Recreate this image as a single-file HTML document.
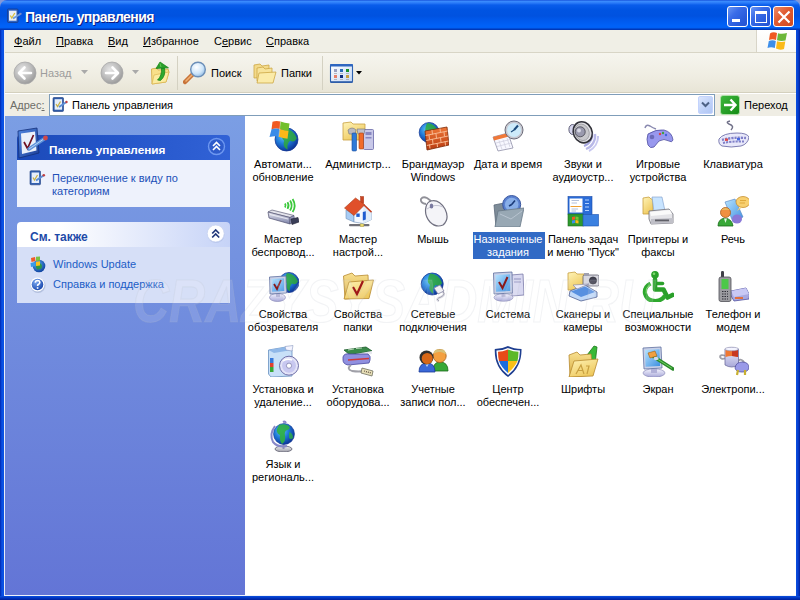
<!DOCTYPE html>
<html><head><meta charset="utf-8">
<style>
*{margin:0;padding:0;box-sizing:border-box}
html,body{width:800px;height:600px;overflow:hidden;background:#8498D8;font-family:"Liberation Sans",sans-serif;font-size:11px;color:#000}
.a{position:absolute}
#title{left:0;top:0;width:800px;height:30px;background:linear-gradient(#0A3FD0 0px,#3E8FFF 1px,#2A7AF8 3px,#0A5DEB 5px,#0054E2 10px,#0052E0 16px,#0059EC 20px,#0062F8 26px,#0060F4 28px,#0038B8 29px,#0038B8 30px);border-radius:7px 7px 0 0}
#ttext{left:25px;top:9px;color:#fff;font-weight:bold;font-size:14px;letter-spacing:-0.55px;text-shadow:1px 1px 0 #0A1A80;white-space:nowrap}
.tb{top:6px;width:21px;height:21px;border:1px solid #fff;border-radius:3px;background:linear-gradient(135deg,#6A96F4,#3A6CE8 35%,#2A5CDC 70%,#2452D0)}
#frameL{left:0;top:30px;width:4px;height:570px;background:linear-gradient(90deg,#0026B0,#0952E6 50%,#0A50E0)}
#frameR{left:796px;top:30px;width:4px;height:570px;background:linear-gradient(90deg,#0A50E0,#0840D0 50%,#00209A)}
#frameB{left:0;top:596px;width:800px;height:4px;background:linear-gradient(#0A50E0,#0030B8 60%,#00209A)}
#menu{left:4px;top:30px;width:792px;height:23px;background:#F0EFE6;border-bottom:1px solid #D8D5C6}
#menu span{position:absolute;top:5px}
#menu u{text-decoration:underline}
#logo{left:756px;top:30px;width:40px;height:22px;background:linear-gradient(#FFFFFF,#F8F8F4);border-left:1px solid #D8D5C8}
#tool{left:4px;top:53px;width:792px;height:40px;background:linear-gradient(#F6F5EE,#EFEDE2 60%,#E8E5D6);border-bottom:1px solid #D4D0BE}
#addr{left:4px;top:93px;width:792px;height:23px;background:#EFEDE4;border-top:1px solid #FFFFFF}
#content{left:4px;top:116px;width:792px;height:480px;background:#fff}
#left{left:5px;top:116px;width:240px;height:479px;background:linear-gradient(#7B9EE4,#6375D6)}
.sep{width:1px;background:#D0CDBE;border-right:1px solid #fff}
.ic{position:absolute;width:75px;text-align:center;line-height:13px;white-space:nowrap}
.ic .t{position:absolute;left:0;width:75px;top:44px}
.ic svg{position:absolute;left:21px;top:4px}
.lbl{width:100px;text-align:center;line-height:13px;white-space:nowrap}
</style></head><body>
<div id="title" class="a"></div>
<div id="ttext" class="a">Панель управления</div>
<svg class="a" style="left:6px;top:8px" width="16" height="16" viewBox="0 0 16 16">
 <rect x="1.5" y="1" width="10.5" height="13.5" rx="1" fill="#3364C0" stroke="#14307A" stroke-width="0.6"/>
 <rect x="3" y="2.7" width="7.5" height="10" fill="#E8EEF8"/>
 <path d="M4.3 7.5 L5.8 10 L8.8 5" stroke="#D8C040" stroke-width="1.3" fill="none"/>
 <path d="M7 10.5 L14.5 6" stroke="#6A9AE0" stroke-width="2"/>
 <circle cx="14.6" cy="5.8" r="1.1" fill="#7A8AC8"/>
</svg>
<div class="a tb" style="left:727px"><div class="a" style="left:4px;top:12px;width:8px;height:3px;background:#fff"></div></div>
<div class="a tb" style="left:750px"><div class="a" style="left:4px;top:4px;width:12px;height:12px;border:1px solid #fff;border-top-width:3px"></div></div>
<div class="a tb" style="left:773px;background:linear-gradient(135deg,#EC8A68,#E05A30 45%,#D04A20)"><svg class="a" style="left:3px;top:3px" width="14" height="14" viewBox="0 0 14 14"><path d="M1.5 1.5 L12.5 12.5 M12.5 1.5 L1.5 12.5" stroke="#fff" stroke-width="2.2"/></svg></div>
<div id="frameL" class="a"></div>
<div id="frameR" class="a"></div>
<div id="frameB" class="a"></div>
<div id="menu" class="a">
 <span style="left:10px"><u>Ф</u>айл</span>
 <span style="left:52px"><u>П</u>равка</span>
 <span style="left:104px"><u>В</u>ид</span>
 <span style="left:139px"><u>И</u>збранное</span>
 <span style="left:210px">С<u>е</u>рвис</span>
 <span style="left:262px"><u>С</u>правка</span>
</div>
<div id="logo" class="a"></div>
<svg class="a" style="left:766px;top:31px" width="22" height="20" viewBox="0 0 22 20">
 <path d="M4 2.5 Q7 0.5 11 2 L10 9 Q6.5 7.5 3 9 Z" fill="#F05A22"/>
 <path d="M12 2.2 Q16 3.5 21 2 L19.5 9.5 Q15 10.5 11 9.2 Z" fill="#6CB83A"/>
 <path d="M2.8 10 Q6.5 8.5 9.8 10 L8.8 17 Q5 15.5 1.5 17 Z" fill="#3C8EEA"/>
 <path d="M11 10.2 Q15 11.5 19.3 10.5 L18 18 Q14 19.5 10 17.5 Z" fill="#FBBA18"/>
</svg>

<div id="tool" class="a"></div>
<!-- back -->
<svg class="a" style="left:13px;top:61px" width="24" height="24" viewBox="0 0 24 24">
 <defs><radialGradient id="gb" cx="40%" cy="35%" r="65%"><stop offset="0" stop-color="#E6E6E6"/><stop offset="0.6" stop-color="#BDBDBD"/><stop offset="1" stop-color="#9C9C9C"/></radialGradient></defs>
 <circle cx="12" cy="12" r="11" fill="url(#gb)" stroke="#A8A8A8" stroke-width="0.8"/>
 <path d="M11.5 6.5 L6 12 L11.5 17.5 M6.5 12 H18" stroke="#fff" stroke-width="2.6" fill="none" stroke-linecap="round" stroke-linejoin="round"/>
</svg>
<div class="a" style="left:40px;top:67px;color:#9D9D9D">Назад</div>
<svg class="a" style="left:81px;top:70px" width="7" height="4"><path d="M0 0H7L3.5 4Z" fill="#A9A9A9"/></svg>
<svg class="a" style="left:100px;top:61px" width="24" height="24" viewBox="0 0 24 24">
 <circle cx="12" cy="12" r="11" fill="url(#gb)" stroke="#A8A8A8" stroke-width="0.8"/>
 <path d="M12.5 6.5 L18 12 L12.5 17.5 M17.5 12 H6" stroke="#fff" stroke-width="2.6" fill="none" stroke-linecap="round" stroke-linejoin="round"/>
</svg>
<svg class="a" style="left:132px;top:70px" width="7" height="4"><path d="M0 0H7L3.5 4Z" fill="#A9A9A9"/></svg>
<!-- up folder -->
<svg class="a" style="left:149px;top:61px" width="23" height="24" viewBox="0 0 23 24">
 <path d="M2.5 8 L8 7 L9 9 L19 8 L20 11 L17 21 L3 23 Z" fill="#F8E08A" stroke="#D0A840" stroke-width="0.8"/>
 <path d="M5 14 L20 11 L17 21 L3 23 Z" fill="#FBEBA0" stroke="#D8B048" stroke-width="0.6"/>
 <path d="M8.5 19 Q13 15 12.5 7 L15.5 7 Q17 15 11.5 19.5 Z" fill="#2EA82E" stroke="#138013" stroke-width="0.7"/>
 <path d="M7 7.5 L11 1 L19.5 6.8 Z" fill="#2AA02A" stroke="#138013" stroke-width="0.7"/>
 <path d="M12 6 L11 2.5" stroke="#70D060" stroke-width="0.8"/>
</svg>
<div class="a" style="left:177px;top:56px;width:1px;height:34px;background:#D4D1C2"></div>
<!-- search -->
<svg class="a" style="left:183px;top:61px" width="25" height="24" viewBox="0 0 25 24">
 <defs><radialGradient id="gs" cx="40%" cy="35%" r="70%"><stop offset="0" stop-color="#FFFFFF"/><stop offset="0.6" stop-color="#CFE6FA"/><stop offset="1" stop-color="#8EB9E2"/></radialGradient></defs>
 <path d="M9 14 L2 21" stroke="#C8743A" stroke-width="4.5" stroke-linecap="round"/>
 <path d="M9 14 L3 20" stroke="#F0B070" stroke-width="1.6" stroke-linecap="round"/>
 <circle cx="15" cy="8.5" r="7.3" fill="url(#gs)" stroke="#6C8FB8" stroke-width="1.4"/>
</svg>
<div class="a" style="left:211px;top:67px">Поиск</div>
<!-- folders -->
<svg class="a" style="left:253px;top:62px" width="24" height="22" viewBox="0 0 24 22">
 <path d="M1 3 L7 2 L9 4 L16 3 L16 15 L1 16 Z" fill="#F3DA8A" stroke="#CDA744" stroke-width="0.8"/>
 <path d="M4 6 L10 5 L12 7 L19 6 L19 18 L4 19 Z" fill="#F7E39A" stroke="#CDA744" stroke-width="0.8"/>
 <path d="M6 11 L23 10 L20 21 L4 21 Z" fill="#FBEBA8" stroke="#CDA744" stroke-width="0.8"/>
</svg>
<div class="a" style="left:281px;top:67px">Папки</div>
<div class="a" style="left:322px;top:56px;width:1px;height:34px;background:#D4D1C2"></div>
<!-- views -->
<svg class="a" style="left:329px;top:63px" width="25" height="21" viewBox="0 0 25 21">
 <defs><linearGradient id="gvw" x1="0" y1="0" x2="1" y2="1"><stop offset="0" stop-color="#FFFFFF"/><stop offset="1" stop-color="#C4D8F6"/></linearGradient></defs>
 <rect x="1.5" y="1.5" width="22" height="18" rx="1.2" fill="url(#gvw)" stroke="#2E62B0" stroke-width="1.1"/>
 <rect x="1" y="1" width="23" height="2.6" rx="1" fill="#2E66C0"/>
 <rect x="1.5" y="18.2" width="22" height="1.6" fill="#2E5EA8"/>
 <rect x="5" y="6" width="3" height="3" fill="#9AA0C0"/><rect x="11" y="6" width="3" height="3" fill="#2A6CB8"/><rect x="17" y="6" width="3" height="3" fill="#18902A"/>
 <rect x="5" y="12" width="3" height="3" fill="#E8806A"/><rect x="11" y="12" width="3" height="3" fill="#102C7C"/><rect x="17" y="12" width="3" height="3" fill="#C8A040"/>
 <path d="M5 10.5 H8 M11 10.5 H14 M17 10.5 H20 M5 16.5 H8 M11 16.5 H14 M17 16.5 H20" stroke="#A8A8B0" stroke-width="0.8"/>
</svg>
<svg class="a" style="left:356px;top:71px" width="6" height="4"><path d="M0 0H6L3 3.5Z" fill="#000"/></svg>


<div id="addr" class="a"></div>
<div class="a" style="left:10px;top:99px;color:#6E6D68">Адрес<span style="text-decoration:underline">:</span></div>
<div class="a" style="left:49px;top:94px;width:666px;height:22px;background:#fff;border:1px solid #7F9DB9"></div>
<svg class="a" style="left:52px;top:97px" width="16" height="16" viewBox="0 0 16 16">
 <rect x="1" y="0.5" width="10.5" height="14" rx="1" fill="#2E5AA6" stroke="#1C3C80" stroke-width="0.6"/>
 <rect x="2.6" y="2.2" width="7.5" height="10.5" fill="#E6EEFA"/>
 <path d="M4 7 L5.5 9.5 L8.5 4.5" stroke="#C8B040" stroke-width="1.2" fill="none"/>
 <path d="M7 10 L14.5 5" stroke="#5C8ED6" stroke-width="2"/>
 <circle cx="14.5" cy="5" r="1.2" fill="#C04040"/>
</svg>
<div class="a" style="left:72px;top:99px">Панель управления</div>
<div class="a" style="left:698px;top:96px;width:15px;height:18px;border-radius:2px;background:linear-gradient(135deg,#DCE6FD,#BDD0F8 60%,#B0C6F4);border:1px solid #C3D3FD"></div>
<svg class="a" style="left:701px;top:101px" width="9" height="7" viewBox="0 0 9 7"><path d="M1 1.5 L4.5 5 L8 1.5" stroke="#4D6185" stroke-width="2" fill="none"/></svg>
<svg class="a" style="left:720px;top:95px" width="20" height="20" viewBox="0 0 20 20">
 <defs><linearGradient id="ggo" x1="0" y1="0" x2="1" y2="1"><stop offset="0" stop-color="#3FB83F"/><stop offset="1" stop-color="#138A13"/></linearGradient></defs>
 <rect x="0.5" y="0.5" width="19" height="19" rx="2.5" fill="url(#ggo)" stroke="#B8E4B0" stroke-width="0.8"/>
 <path d="M10.5 4.5 L15.5 10 L10.5 15.5 M15 10 H4" stroke="#fff" stroke-width="2.4" fill="none" stroke-linejoin="miter"/>
</svg>
<div class="a" style="left:744px;top:99px">Переход</div>

<div id="content" class="a"></div>

<div id="left" class="a"></div>
<!-- panel 1 -->
<div class="a" style="left:17px;top:135px;width:213px;height:25px;border-radius:4px 4px 0 0;background:linear-gradient(90deg,#1C4AB8,#2354C8 40%,#3162D6)"></div>
<div class="a" style="left:17px;top:160px;width:213px;height:47px;background:#EEF2FC"></div>
<div class="a" style="left:49px;top:143px;color:#fff;font-weight:bold;font-size:11.8px;white-space:nowrap">Панель управления</div>
<svg class="a" style="left:207px;top:137px" width="19" height="19" viewBox="0 0 19 19">
 <circle cx="9.5" cy="9.5" r="8" fill="#2E5CCC" stroke="#6E98F0" stroke-width="1.4"/>
 <path d="M6 9 L9.5 5.5 L13 9 M6 13 L9.5 9.5 L13 13" stroke="#fff" stroke-width="1.6" fill="none"/>
</svg>
<svg class="a" style="left:16px;top:127px" width="34" height="34" viewBox="0 0 34 34">
 <defs><linearGradient id="gcp" x1="0" y1="0" x2="1" y2="1"><stop offset="0" stop-color="#4F86E0"/><stop offset="1" stop-color="#1D3F98"/></linearGradient></defs>
 <path d="M2 4 L21 1 L23 26 L3 31 Z" fill="url(#gcp)" stroke="#14307A" stroke-width="0.8"/>
 <path d="M5 6.5 L19 4.5 L20.5 23.5 L6 27 Z" fill="#EAF0FA"/>
 <path d="M8 15 L11.5 21.5 L17.5 8" stroke="#701020" stroke-width="1.7" fill="none" stroke-linejoin="miter"/>
 <path d="M13 22 L28 12" stroke="#5E92DA" stroke-width="3.5" stroke-linecap="round"/>
 <path d="M13 22 L27 12.5" stroke="#B8D4F4" stroke-width="1" />
 <circle cx="29.5" cy="11" r="2.4" fill="#D04848"/>
</svg>
<svg class="a" style="left:29px;top:170px" width="17" height="16" viewBox="0 0 17 16">
 <rect x="1" y="0.8" width="10.5" height="14" rx="1" fill="#3260B0" stroke="#1C3C80" stroke-width="0.6"/>
 <rect x="2.6" y="2.5" width="7.5" height="10.5" fill="#E6EEFA"/>
 <path d="M4 7.5 L5.5 10 L8.5 5" stroke="#C8B040" stroke-width="1.2" fill="none"/>
 <path d="M7 10.5 L14.5 5.5" stroke="#5C8ED6" stroke-width="2"/>
 <circle cx="14.8" cy="5.3" r="1.3" fill="#C04040"/>
</svg>
<div class="a" style="left:52px;top:172px;color:#2150B8;line-height:13px">Переключение к виду по<br>категориям</div>
<!-- panel 2 -->
<div class="a" style="left:17px;top:222px;width:213px;height:25px;border-radius:4px 4px 0 0;background:linear-gradient(90deg,#FFFFFF 20%,#C6D3F7)"></div>
<div class="a" style="left:17px;top:247px;width:213px;height:56px;background:#D6DFF7"></div>
<div class="a" style="left:30px;top:230px;color:#1E4AA8;font-weight:bold;font-size:12px;white-space:nowrap">См. также</div>
<svg class="a" style="left:206px;top:224px" width="20" height="20" viewBox="0 0 20 20">
 <circle cx="10" cy="10.5" r="8.5" fill="#9FB0DE" opacity="0.5"/>
 <circle cx="9.7" cy="9.5" r="8.5" fill="#fff" stroke="#C8D3F0" stroke-width="0.8"/>
 <path d="M6.2 9.5 L9.7 6 L13.2 9.5 M6.2 13.5 L9.7 10 L13.2 13.5" stroke="#21377A" stroke-width="1.7" fill="none"/>
</svg>
<svg class="a" style="left:29px;top:256px" width="17" height="17" viewBox="0 0 17 17">
 <defs><radialGradient id="gglobe" cx="40%" cy="35%" r="70%"><stop offset="0" stop-color="#5AB0F0"/><stop offset="1" stop-color="#0A3C9C"/></radialGradient></defs>
 <circle cx="10" cy="10" r="6.3" fill="url(#gglobe)"/>
 <path d="M7 7 Q10 5 12 8 Q14 10 12 13 Q10 12 9 14 Q6 12 7 7Z" fill="#2E9A3A" opacity="0.9"/>
 <path d="M2 2 L6 1 L6.5 5 L2.5 6 Z" fill="#F05A28"/>
 <path d="M7 0.8 L11 0.5 L11 4.5 L7 5 Z" fill="#7CC142"/>
 <path d="M1.5 7 L6 6 L6.5 10 L2 11 Z" fill="#3A9BEA"/>
 <path d="M7 5.8 L11 5.3 L11 9.5 L7 10 Z" fill="#FBC21A"/>
</svg>
<div class="a" style="left:53px;top:258px;color:#215DC6">Windows Update</div>
<svg class="a" style="left:30px;top:277px" width="16" height="16" viewBox="0 0 16 16">
 <defs><radialGradient id="ghelp" cx="35%" cy="30%" r="70%"><stop offset="0" stop-color="#7AA8F0"/><stop offset="1" stop-color="#1E4CB0"/></radialGradient></defs>
 <circle cx="8" cy="8.5" r="7.5" fill="#8090B8" opacity="0.4"/>
 <circle cx="7.5" cy="7.5" r="7" fill="#fff"/>
 <circle cx="7.5" cy="7.5" r="5.8" fill="url(#ghelp)"/>
 <path d="M5.3 5.6 Q5.5 3.5 7.6 3.5 Q9.8 3.6 9.8 5.5 Q9.8 6.8 8.3 7.5 Q7.6 7.9 7.6 9" stroke="#fff" stroke-width="1.6" fill="none"/>
 <rect x="6.8" y="10.2" width="1.6" height="1.6" fill="#fff"/>
</svg>
<div class="a" style="left:53px;top:278px;color:#215DC6">Справка и поддержка</div>

<!--GRID-->
<svg width="0" height="0" style="position:absolute"><defs>
<radialGradient id="globe" cx="38%" cy="35%" r="70%"><stop offset="0" stop-color="#62C8F8"/><stop offset="0.5" stop-color="#1E78D8"/><stop offset="1" stop-color="#0A2E90"/></radialGradient>
<radialGradient id="globe2" cx="40%" cy="30%" r="70%"><stop offset="0" stop-color="#80E070"/><stop offset="0.45" stop-color="#28A040"/><stop offset="1" stop-color="#0E5A28"/></radialGradient>
<linearGradient id="fold" x1="0" y1="0" x2="0.6" y2="1"><stop offset="0" stop-color="#FFF4B8"/><stop offset="1" stop-color="#EEC85C"/></linearGradient>
<linearGradient id="foldb" x1="0" y1="0" x2="0" y2="1"><stop offset="0" stop-color="#F8E090"/><stop offset="1" stop-color="#D8AC40"/></linearGradient>
<linearGradient id="scr" x1="0" y1="0" x2="1" y2="1"><stop offset="0" stop-color="#B8E4FF"/><stop offset="1" stop-color="#3C8EE0"/></linearGradient>
<linearGradient id="lav" x1="0" y1="0" x2="0" y2="1"><stop offset="0" stop-color="#F4F4FF"/><stop offset="1" stop-color="#A8A8D8"/></linearGradient>
<linearGradient id="gray" x1="0" y1="0" x2="0" y2="1"><stop offset="0" stop-color="#F0F0F0"/><stop offset="1" stop-color="#9C9CA8"/></linearGradient>
<linearGradient id="green" x1="0" y1="0" x2="1" y2="1"><stop offset="0" stop-color="#7ADC5A"/><stop offset="1" stop-color="#1C8A22"/></linearGradient>
<linearGradient id="brick" x1="0" y1="0" x2="0" y2="1"><stop offset="0" stop-color="#F07838"/><stop offset="1" stop-color="#B83A10"/></linearGradient>
</defs></svg>
<svg class="a" style="left:267px;top:120px" width="32" height="32" viewBox="0 0 32 32"><circle cx="19.5" cy="19.5" r="11.5" fill="url(#globe)" stroke="#1A3E98" stroke-width="0.8"/>
<path d="M17.2 8.575000000000001 Q26.4 9.15 29.85 18.35 Q27.549999999999997 22.95 22.95 20.65 Q19.5 24.1 20.65 29.85 Q14.899999999999999 26.4 17.2 20.65 Q12.600000000000001 17.2 17.2 8.575000000000001Z" fill="#2EA83A" opacity="0.85"/>
<path d="M5.5 1.8 Q9 0.5 13.5 1.5 L12.8 9 Q9 8 4.5 9.2 Z" fill="#F05A22"/>
<path d="M13.5 1.5 Q17.5 3 22.5 3.5 L21.5 11 Q17 10.5 12.8 9 Z" fill="#72C02C"/>
<path d="M4.5 9.2 Q9 8 12.8 9 L11.8 16.8 Q7.5 15.8 2.5 17 Z" fill="#3A8CE8"/>
<path d="M12.8 9 Q17 10.5 21.5 11 L20.5 18.8 Q16 18.3 11.8 16.8 Z" fill="#FBB818"/>
<path d="M13.5 1.5 L11.8 16.8" stroke="#FFFFFF" stroke-width="0.5" opacity="0.6"/></svg>
<div class="a lbl" style="left:233px;top:158px">Автомати...<br>обновление</div>
<svg class="a" style="left:342px;top:120px" width="32" height="32" viewBox="0 0 32 32">
<path d="M1 3 L9 2 L11 4 L23 4 L23 20 L1 20 Z" fill="url(#fold)" stroke="#C8A040" stroke-width="0.8"/>
<rect x="21.5" y="9.5" width="10" height="20" rx="1" fill="#C8C8E8" stroke="#6A6AA8" stroke-width="0.8"/>
<rect x="23.5" y="12" width="6" height="3" fill="#8888C0"/><rect x="23.5" y="17" width="6" height="1.5" fill="#8888C0"/>
<path d="M6 10 Q10 6 14 10 L13 14 L7 14 Z" fill="#B8B8C0" stroke="#707078" stroke-width="0.6"/>
<rect x="10" y="13" width="4.5" height="18" rx="1" fill="#2E7AD8" stroke="#1A4A9A" stroke-width="0.6"/>
<path d="M15 9 L23 9 L22 14 L16 14 Z" fill="#C0C0C8" stroke="#707078" stroke-width="0.6"/>
<rect x="17" y="13" width="4.5" height="16" rx="1" fill="#F06A2A" stroke="#A84010" stroke-width="0.6"/></svg>
<div class="a lbl" style="left:308px;top:158px">Администр...</div>
<svg class="a" style="left:417px;top:120px" width="32" height="32" viewBox="0 0 32 32"><circle cx="12.2" cy="12.5" r="10" fill="url(#globe)" stroke="#1A3E98" stroke-width="0.8"/>
<path d="M10.2 3.0 Q18.2 3.5 21.2 11.5 Q19.2 15.5 15.2 13.5 Q12.2 16.5 13.2 21.5 Q8.2 18.5 10.2 13.5 Q6.199999999999999 10.5 10.2 3.0Z" fill="#2EA83A" opacity="0.85"/>
<path d="M8 11 L30 7 L32 25 L10 30 Z" fill="url(#brick)" stroke="#7A2A08" stroke-width="0.8"/>
<path d="M8.6 15.5 L30.6 11 M9.2 20.5 L31.2 16 M9.8 25.5 L31.6 21" stroke="#F8B890" stroke-width="1"/>
<path d="M15 10 L15.5 14.5 M23 8.5 L23.5 13 M12 15 L12.5 19.5 M19 14 L19.5 18.5 M27 12 L27.5 16.5 M15.5 19 L16 24 M23.5 17.5 L24 22 M12.5 24.5 L13 28.5 M20 23 L20.5 27 M28 21 L28.5 25.5" stroke="#F8B890" stroke-width="1"/></svg>
<div class="a lbl" style="left:383px;top:158px">Брандмауэр<br>Windows</div>
<svg class="a" style="left:492px;top:120px" width="32" height="32" viewBox="0 0 32 32">
<path d="M1 17 L16 13 L21 28 L6 31 Z" fill="#F8F8FF" stroke="#9090A8" stroke-width="0.8"/>
<path d="M1 17 L16 13 L17 16.5 L2 20.5 Z" fill="#F07838"/>
<path d="M4 23 L18 19.5 M5 26.5 L19 23 M7 20.5 L10 29.5 M11 19.5 L14 28.5 M15 18 L18 27" stroke="#D0D0E0" stroke-width="0.8"/>
<circle cx="22" cy="10" r="9" fill="#C8C8D0" stroke="#6A6A78" stroke-width="1"/>
<circle cx="22" cy="10" r="7" fill="#CDEBFA"/>
<path d="M22 10 L26 5.5" stroke="#1A4A7A" stroke-width="2"/><path d="M22 10 L19 12" stroke="#1A4A7A" stroke-width="1.2"/></svg>
<div class="a lbl" style="left:458px;top:158px">Дата и время</div>
<svg class="a" style="left:567px;top:120px" width="32" height="32" viewBox="0 0 32 32">
<path d="M28 14 A14 14 0 0 1 19 29" stroke="#B8B8E8" stroke-width="2.4" fill="none"/>
<path d="M31 16 A16 16 0 0 1 22 31" stroke="#C8C8F0" stroke-width="2" fill="none"/>
<path d="M25 12 A12 12 0 0 1 17 26" stroke="#A8A8E0" stroke-width="2" fill="none"/>
<ellipse cx="5.5" cy="9.5" rx="3.6" ry="5" fill="#D4D4EC" stroke="#50506A" stroke-width="0.9"/>
<ellipse cx="15.7" cy="12.3" rx="9.3" ry="10.8" transform="rotate(-25 15.7 12.3)" fill="#E0E0E4" stroke="#303038" stroke-width="1.6"/>
<ellipse cx="15" cy="12.3" rx="7" ry="8.5" transform="rotate(-25 15 12.3)" fill="#C8C8CC" stroke="#9A9AA0" stroke-width="0.8"/>
<circle cx="13.2" cy="11.8" r="5" fill="#9A9AAE" stroke="#50505A" stroke-width="0.9"/>
<circle cx="12" cy="10.5" r="2" fill="#D8D8E4"/></svg>
<div class="a lbl" style="left:533px;top:158px">Звуки и<br>аудиоустр...</div>
<svg class="a" style="left:642px;top:120px" width="32" height="32" viewBox="0 0 32 32">
<path d="M3 8 Q4 4 8 6 Q11 8 14 9" stroke="#8A8AB0" stroke-width="1.5" fill="none"/>
<path d="M6 14 Q14 9 22 10 Q30 12 31 20 Q30 23 27 21 Q22 18 17 21 L12 27 Q8 29 6 25 Q4 19 6 14 Z" fill="#9898EE" stroke="#5050A0" stroke-width="0.8"/>
<circle cx="10" cy="17" r="2.3" fill="#6A6AB8"/>
<circle cx="18" cy="14" r="1.2" fill="#E04040"/><circle cx="21" cy="13" r="1.2" fill="#40A040"/><circle cx="24" cy="15" r="1.2" fill="#4060E0"/></svg>
<div class="a lbl" style="left:608px;top:158px">Игровые<br>устройства</div>
<svg class="a" style="left:717px;top:120px" width="32" height="32" viewBox="0 0 32 32">
<path d="M14 10 Q18 6 12 4 Q8 2 13 1" stroke="#707088" stroke-width="1.5" fill="none"/>
<path d="M2 19 Q6 13 20 13 Q30 13 32 17 Q31 24 24 26 Q14 28 5 26 Q1 24 2 19 Z" fill="#E8E8FA" stroke="#6060A0" stroke-width="0.8"/>
<path d="M5 20 Q15 17 29 18" stroke="#8080C8" stroke-width="2.4" fill="none" stroke-dasharray="2.2 1"/>
<path d="M6 23 Q15 21 27 21.5" stroke="#8080C8" stroke-width="2" fill="none" stroke-dasharray="2.2 1"/>
<rect x="8" y="18.5" width="3" height="2.4" fill="#E04848"/><rect x="20" y="18" width="3" height="2.4" fill="#4868E0"/></svg>
<div class="a lbl" style="left:683px;top:158px">Клавиатура</div>
<svg class="a" style="left:267px;top:195px" width="32" height="32" viewBox="0 0 32 32">
<path d="M18.0 8.6 A3.5 3.5 0 0 1 18.0 12.4" stroke="#3CC83C" stroke-width="1.8" fill="none"/><path d="M20.5 7.1 A6.5 6.5 0 0 1 20.5 13.9" stroke="#3CC83C" stroke-width="1.8" fill="none"/><path d="M23.1 5.5 A9.5 9.5 0 0 1 23.1 15.5" stroke="#3CC83C" stroke-width="1.8" fill="none"/><path d="M25.6 3.9 A12.5 12.5 0 0 1 25.6 17.1" stroke="#3CC83C" stroke-width="1.8" fill="none"/>
<defs><linearGradient id="usbf" x1="0" y1="0" x2="0" y2="1"><stop offset="0" stop-color="#E8E8F0"/><stop offset="1" stop-color="#7A80A8"/></linearGradient></defs>
<path d="M1 17 L5 15 L27 20.5 L23 22.5 Z" fill="#E4E4EC" stroke="#606078" stroke-width="0.7"/>
<path d="M1 17 L23 22.5 L23 29 L2 23 Z" fill="url(#usbf)" stroke="#505070" stroke-width="0.7"/>
<path d="M23 22.5 L27 20.5 L27.5 26.5 L23 29 Z" fill="#9A9EC0" stroke="#505070" stroke-width="0.6"/>
<path d="M24 24 L31 22.5 L32 27 L25 29.5 Z" fill="#3A3E58" stroke="#202030" stroke-width="0.6"/>
<path d="M3 19.5 L21 24" stroke="#F4F4FA" stroke-width="0.8"/></svg>
<div class="a lbl" style="left:233px;top:233px">Мастер<br>беспровод...</div>
<svg class="a" style="left:342px;top:195px" width="32" height="32" viewBox="0 0 32 32">
<path d="M20 26 V30" stroke="#909098" stroke-width="1.5"/>
<rect x="7" y="29" width="20.5" height="2.2" rx="1" fill="#707078"/><circle cx="20" cy="30" r="2" fill="#E8D870" stroke="#A09040" stroke-width="0.5"/>
<path d="M4 15 L12 18.5 L12 27 L4 23.5 Z" fill="#A8CCF4" stroke="#7090B8" stroke-width="0.6"/>
<path d="M12 18.5 L21.5 9 L29.5 17 L29.5 24.5 L21 28.5 L12 27 Z" fill="#F4F8FF" stroke="#7090B8" stroke-width="0.6"/>
<path d="M21.5 9 L29.5 17 L29.5 24.5 L21 28.5 Z" fill="#E0ECFA"/>
<rect x="14.3" y="18.5" width="3.4" height="3.4" fill="#1E5CD0"/>
<path d="M20.8 17 L23.8 16.2 L23.8 24.5 L20.8 25.5 Z" fill="#1E5CD0"/>
<rect x="18.5" y="1.5" width="3.2" height="7" fill="#C84424" stroke="#A83A18" stroke-width="0.5"/>
<path d="M2.5 13 L13.5 3 L22.5 9.5 L21.5 11 L12 20.5 Z" fill="#E0502A" stroke="#A83A18" stroke-width="0.6"/>
<path d="M22.5 9.5 L30 16.5 L29 17.8 L21.5 10.6 Z" fill="#C84020"/>
</svg>
<div class="a lbl" style="left:308px;top:233px">Мастер<br>настрой...</div>
<svg class="a" style="left:417px;top:195px" width="32" height="32" viewBox="0 0 32 32">
<path d="M9 9 Q3 8 4 4 Q6 1 10 3 Q13 5 15 7" stroke="#909098" stroke-width="1.8" fill="none"/>
<path d="M14 6 Q22 4 28 14 Q33 24 26 30 Q19 33 13 27 Q7 20 9 12 Q10 7 14 6 Z" fill="#F4F4F8" stroke="#707080" stroke-width="1.2"/>
<path d="M10 14 Q18 8 26 12" stroke="#B8B8C8" stroke-width="0.8" fill="none"/>
<ellipse cx="14.5" cy="11" rx="1.8" ry="2.5" fill="#7A7AA0"/></svg>
<div class="a lbl" style="left:383px;top:233px">Мышь</div>
<svg class="a" style="left:492px;top:195px" width="32" height="32" viewBox="0 0 32 32">
<path d="M2 10 L12 8 L14 11 L26 10 L27 30 L4 32 Z" fill="#7E8C98" stroke="#5A6878" stroke-width="0.8"/>
<circle cx="19.7" cy="9.5" r="9" fill="#5A80D0" stroke="#3A58A0" stroke-width="1"/>
<circle cx="19.7" cy="9.5" r="6.8" fill="#88AEE8"/>
<path d="M19.7 9.5 L23 5.5 M19.7 9.5 L17 11" stroke="#1A3A78" stroke-width="1.6"/>
<path d="M6 16 L32 13 L28 32 L3 32 Z" fill="#98A8B4" stroke="#687888" stroke-width="0.8"/>
<path d="M8 19 L19 24 L30 16" stroke="#B8C4D0" stroke-width="1" fill="none"/></svg>
<div class="a" style="left:473px;top:232px;width:72px;height:27px;background:#316AC5"></div>
<div class="a lbl" style="left:458px;top:233px;color:#fff">Назначенные<br>задания</div>
<svg class="a" style="left:567px;top:195px" width="32" height="32" viewBox="0 0 32 32">
<rect x="1" y="1.5" width="24" height="18" fill="#2A6CD8" stroke="#1A4AA8" stroke-width="0.6"/>
<rect x="2.5" y="3.5" width="13" height="14" fill="#FFFFFF"/>
<rect x="3.5" y="11" width="11" height="1" fill="#F0A030"/>
<path d="M4.5 5.5 H12 M4.5 8 H10 M4.5 14 H11 M4.5 16 H9" stroke="#A0B0D0" stroke-width="0.8"/>
<path d="M18 5 H22 M18 8.5 H22 M18 12 H22 M18 15.5 H22" stroke="#B0D0FF" stroke-width="1.2"/>
<rect x="1" y="19" width="15.5" height="12" fill="#2E9A2E" stroke="#1A6A1A" stroke-width="0.6"/>
<rect x="16" y="19.5" width="15.5" height="11.5" fill="#3A80E0" stroke="#1A50B0" stroke-width="0.6"/>
<path d="M5 22 L8 21.5 L8 24.5 L5 25Z" fill="#F05A22"/><path d="M8.5 21.5 L11.5 22 L11.5 25 L8.5 24.5Z" fill="#7CC232"/>
<path d="M5 25.5 L8 25 L8 28 L5 28.5Z" fill="#3C8EEA"/><path d="M8.5 25 L11.5 25.5 L11.5 28.5 L8.5 28Z" fill="#FBBA18"/></svg>
<div class="a lbl" style="left:533px;top:233px">Панель задач<br>и меню "Пуск"</div>
<svg class="a" style="left:642px;top:195px" width="32" height="32" viewBox="0 0 32 32">
<path d="M1 3 L7 2 L9 4 L11 4 L11 19 L1 19 Z" fill="url(#fold)" stroke="#C8A040" stroke-width="0.8"/>
<path d="M10 2 L20 2 L23 16 L12 17 Z" fill="#C8E4FF" stroke="#7898C8" stroke-width="0.6"/>
<path d="M7 16 L27 14 L31 19 L31 28 L9 29 L7 24 Z" fill="#E4E4E8" stroke="#707078" stroke-width="0.8"/>
<path d="M8 17 L28 15 L30 19 L9 21 Z" fill="#FAFAFA"/>
<path d="M9 24 L31 23 L31 28 L9 29 Z" fill="#C0C0C8"/>
<rect x="13" y="24.5" width="14" height="1.8" fill="#606068"/></svg>
<div class="a lbl" style="left:608px;top:233px">Принтеры и<br>факсы</div>
<svg class="a" style="left:717px;top:195px" width="32" height="32" viewBox="0 0 32 32">
<path d="M8 7 L18 4 L26 22 L16 27 Z" fill="url(#scr)" stroke="#5080C0" stroke-width="0.6"/>
<ellipse cx="20" cy="24" rx="5" ry="4.5" fill="#8A78D8"/>
<ellipse cx="26" cy="7" rx="7" ry="5.5" fill="#F8D070" stroke="#C89030" stroke-width="0.8"/>
<path d="M22 13 L20 16 L25 12.5" fill="#F8D070"/>
<path d="M23 5.5 H29 M22.5 8 H28" stroke="#D8A030" stroke-width="0.8"/>
<path d="M1 31 Q1 24 8 23 Q15 24 16 31 Z" fill="#38A838" stroke="#1A6A1A" stroke-width="0.8"/>
<path d="M7 23.5 L8.5 28 L10 23.5" fill="#E8F8E8"/>
<circle cx="8.5" cy="17.5" r="5" fill="#F09040" stroke="#A85A18" stroke-width="0.8"/>
<path d="M4 15 Q8.5 11 13 15" fill="#E8B860"/></svg>
<div class="a lbl" style="left:683px;top:233px">Речь</div>
<svg class="a" style="left:267px;top:270px" width="32" height="32" viewBox="0 0 32 32"><circle cx="22" cy="12.5" r="10" fill="url(#globe)" stroke="#1A3E98" stroke-width="0.8"/>
<path d="M20.0 3.0 Q28.0 3.5 31.0 11.5 Q29.0 15.5 25.0 13.5 Q22 16.5 23.0 21.5 Q18.0 18.5 20.0 13.5 Q16.0 10.5 20.0 3.0Z" fill="#2EA83A" opacity="0.85"/>
<ellipse cx="10.5" cy="27.5" rx="8" ry="4" fill="url(#lav)" stroke="#8080B0" stroke-width="0.6"/>
<rect x="9" y="22" width="4" height="5" fill="#B8B8D8"/>
<path d="M2.5 7 L19 6 L19.5 23 L3 24 Z" fill="#C8D0E8" stroke="#6070A0" stroke-width="0.8"/>
<path d="M4.5 9 L17 8.2 L17.3 21 L5 21.8 Z" fill="url(#scr)"/>
<path d="M7 14 L10 19 L14 10" stroke="#8A1A1A" stroke-width="1.8" fill="none"/></svg>
<div class="a lbl" style="left:233px;top:308px">Свойства<br>обозревателя</div>
<svg class="a" style="left:342px;top:270px" width="32" height="32" viewBox="0 0 32 32">
<path d="M1.5 6 L10 3 L13 6 L26 5 L27 27 L3 29 Z" fill="url(#foldb)" stroke="#B88A30" stroke-width="0.8"/>
<path d="M7 12 L31.5 10 L27 28.5 L2 29 Z" fill="url(#fold)" stroke="#B88A30" stroke-width="0.8"/>
<path d="M11 17 L15 24 L21 11" stroke="#A01818" stroke-width="2.2" fill="none"/></svg>
<div class="a lbl" style="left:308px;top:308px">Свойства<br>папки</div>
<svg class="a" style="left:417px;top:270px" width="32" height="32" viewBox="0 0 32 32"><circle cx="15.2" cy="14" r="11" fill="url(#globe)" stroke="#1A3E98" stroke-width="0.8"/>
<path d="M13.0 3.5500000000000007 Q21.799999999999997 4.1 25.1 12.9 Q22.9 17.3 18.5 15.1 Q15.2 18.4 16.3 23.9 Q10.799999999999999 20.6 13.0 15.1 Q8.6 11.8 13.0 3.5500000000000007Z" fill="#2EA83A" opacity="0.85"/>
<path d="M24 20 Q30 24 24 27 Q18 29 22 31" stroke="#E0E0E8" stroke-width="2.6" fill="none"/>
<path d="M24 20 Q30 24 24 27 Q18 29 22 31" stroke="#9090A0" stroke-width="0.8" fill="none"/>
<path d="M17 18 L23 15 L27 21 L21 24 Z" fill="#F0F0F4" stroke="#8080A0" stroke-width="0.8"/></svg>
<div class="a lbl" style="left:383px;top:308px">Сетевые<br>подключения</div>
<svg class="a" style="left:492px;top:270px" width="32" height="32" viewBox="0 0 32 32">
<path d="M19 5 L31 4 L32 25 L20 26 Z" fill="#D8D8F0" stroke="#7A7AA8" stroke-width="0.8"/>
<path d="M22 9 H29 M22 12 H29" stroke="#9090C0" stroke-width="1.2"/>
<ellipse cx="11.5" cy="27.5" rx="9.5" ry="3.8" fill="url(#lav)" stroke="#8080B0" stroke-width="0.6"/>
<rect x="9.5" y="22" width="4" height="5" fill="#B8B8D8"/>
<path d="M1.5 3 L20 2 L20.5 23 L2 24 Z" fill="#C8D0E8" stroke="#6070A0" stroke-width="0.8"/>
<path d="M3.5 5 L18 4.3 L18.3 21 L4 21.8 Z" fill="url(#scr)"/>
<path d="M7 12 L10.5 18 L15.5 7" stroke="#8A1A1A" stroke-width="2" fill="none"/></svg>
<div class="a lbl" style="left:458px;top:308px">Система</div>
<svg class="a" style="left:567px;top:270px" width="32" height="32" viewBox="0 0 32 32">
<path d="M1 3 L8 2 L10 4 L17 4 L17 20 L1 20 Z" fill="url(#fold)" stroke="#C8A040" stroke-width="0.8"/>
<rect x="16" y="5" width="16" height="11" rx="1.5" fill="#D8D8E0" stroke="#606070" stroke-width="0.8"/>
<rect x="17" y="3" width="5" height="3" fill="#A0A0B0"/>
<circle cx="26" cy="10.5" r="3.6" fill="#404050" stroke="#202028" stroke-width="0.6"/>
<path d="M3 21 L18 15 L30 22 L30 27 L14 31 L2 26 Z" fill="#C0D8F8" stroke="#506090" stroke-width="0.8"/>
<path d="M4 21.5 L18 16.5 L28 22 L14 27 Z" fill="#5890E0"/>
<path d="M6 15 L22 14 L10 19 Z" fill="#F0F0F8" stroke="#8080A0" stroke-width="0.6"/></svg>
<div class="a lbl" style="left:533px;top:308px">Сканеры и<br>камеры</div>
<svg class="a" style="left:642px;top:270px" width="32" height="32" viewBox="0 0 32 32">
<circle cx="13" cy="4.8" r="3.8" fill="#2AA02A"/>
<path d="M13 9.5 L13 19.5 L21.5 19.5 L25.5 27.5 L30.5 25" stroke="#2AA02A" stroke-width="4.6" fill="none" stroke-linejoin="round" stroke-linecap="round"/>
<path d="M13 13.5 L20.5 13.5" stroke="#2AA02A" stroke-width="3.6" stroke-linecap="round"/>
<path d="M8.5 13.5 Q2 17 3 23.5 Q5 31 13.5 31 Q20.5 30.5 23 25.5" stroke="#2EA82E" stroke-width="4.2" fill="none"/>
<path d="M8 14.5 Q3 18 4 23.5" stroke="#88E070" stroke-width="1" fill="none"/>
<circle cx="12" cy="3.8" r="1.3" fill="#80D870"/></svg>
<div class="a lbl" style="left:608px;top:308px">Специальные<br>возможности</div>
<svg class="a" style="left:717px;top:270px" width="32" height="32" viewBox="0 0 32 32">
<path d="M14 21 L29 18 L32.5 25 L32 29 L17 31 L13.5 25 Z" fill="#A8A8E0" stroke="#5050A0" stroke-width="0.8"/>
<path d="M14 21 L29 18 L32 24 L17 27 Z" fill="#C8C8F4"/>
<rect x="18" y="27" width="8" height="2" fill="#E07040"/>
<rect x="4" y="1" width="3" height="8" rx="1.2" fill="#404048"/>
<rect x="2" y="7" width="12" height="24.5" rx="2" fill="#9C9CA0" stroke="#505058" stroke-width="0.8"/>
<rect x="4.5" y="9" width="7" height="10" fill="#4CC848"/>
<path d="M5 21.5 H11 M5 24 H11 M5 26.5 H11 M5 29 H11" stroke="#303038" stroke-width="1.2" stroke-dasharray="1.5 1"/></svg>
<div class="a lbl" style="left:683px;top:308px">Телефон и<br>модем</div>
<svg class="a" style="left:267px;top:345px" width="32" height="32" viewBox="0 0 32 32">
<path d="M1.5 5 L19 2 L25 5 L25 31 L4 32 L1.5 29 Z" fill="#C8E0F8" stroke="#6890C0" stroke-width="0.8"/>
<path d="M1.5 5 L19 2 L25 5 L7 8 Z" fill="#90B8E8"/>
<path d="M18 1.5 L26 0.5 L25 6 L19 5 Z" fill="#F4F4FF" stroke="#8898C0" stroke-width="0.6"/>
<rect x="3" y="18" width="3.5" height="4" fill="#E04030"/><rect x="3" y="22" width="3.5" height="5" fill="#38A838"/><rect x="3" y="13" width="3.5" height="5" fill="#3878D8"/>
<circle cx="22" cy="20.7" r="9.5" fill="#E4E4F8" stroke="#7070A8" stroke-width="1"/>
<circle cx="22" cy="20.7" r="7" fill="#C8C8F0"/>
<path d="M16 16 Q20 13 25 15" stroke="#FFFFFF" stroke-width="1.5" fill="none"/>
<circle cx="22" cy="20.7" r="2.6" fill="#FFFFFF" stroke="#8080B0" stroke-width="0.8"/></svg>
<div class="a lbl" style="left:233px;top:383px">Установка и<br>удаление...</div>
<svg class="a" style="left:342px;top:345px" width="32" height="32" viewBox="0 0 32 32">
<path d="M2 5 L24 2 L30 6 L8 10 Z" fill="#3A8A4A" stroke="#1A5A2A" stroke-width="0.8"/>
<path d="M8 10 L30 6 L30 9 L8 13 Z" fill="#E8E8F0"/>
<path d="M6 5 L12 4 M14 3.5 L20 3" stroke="#B8D8B8" stroke-width="1"/>
<path d="M1 12 Q2 8 8 9 L26 9 Q29 11 28 15 L27 18 L6 20 Q1 19 1 15 Z" fill="#9090E0" stroke="#4848A0" stroke-width="0.8"/>
<path d="M6 15 L27 13.5" stroke="#D03838" stroke-width="1.5"/>
<path d="M9 20 Q4 24 10 26 Q17 27 22 26" stroke="#A0A0A8" stroke-width="1.8" fill="none"/>
<path d="M20 23 L31 26 L30 31 L19 28 Z" fill="#E8E0B8" stroke="#707060" stroke-width="0.8"/>
<path d="M22 26 L29 28" stroke="#605040" stroke-width="1.2" stroke-dasharray="1 1"/></svg>
<div class="a lbl" style="left:308px;top:383px">Установка<br>оборудова...</div>
<svg class="a" style="left:417px;top:345px" width="32" height="32" viewBox="0 0 32 32">
<path d="M16 26 Q16 17 23 17 Q31 17 31 26 Z" fill="#38A838" stroke="#1A6A1A" stroke-width="0.8"/>
<circle cx="22.7" cy="11" r="6.5" fill="#F4A040" stroke="#A86018" stroke-width="0.8"/>
<path d="M16.5 9 Q17 3.5 22.7 4.5 Q28.5 3.5 29 9.5 Q26 6.5 22 7 Q19 7 16.5 9Z" fill="#D8C078"/>
<path d="M2 27 Q2 18 10 18 Q18 18 18 27 Z" fill="#3A68D8" stroke="#1A3A98" stroke-width="0.8"/>
<path d="M8 18.5 L10 22 L12 18.5" fill="#C0D8F8"/>
<circle cx="9.5" cy="12.5" r="7" fill="#303030"/>
<circle cx="10.2" cy="13.5" r="5.5" fill="#D86818"/></svg>
<div class="a lbl" style="left:383px;top:383px">Учетные<br>записи пол...</div>
<svg class="a" style="left:492px;top:345px" width="32" height="32" viewBox="0 0 32 32">
<path d="M16 1 Q22 4 29.5 4 Q30 22 16 32 Q2 22 2.8 4 Q10 4 16 1 Z" fill="#1E3E90" />
<path d="M16 3 Q21.5 5.5 28 5.5 Q28 21 16 30 Q4 21 4.5 5.5 Q10.5 5.5 16 3 Z" fill="#FFFFFF"/>
<path d="M16 4.5 Q10.5 6.8 6 6.8 Q6 12 7 16 L16 16 Z" fill="#E84A18"/>
<path d="M16 4.5 Q21.5 6.8 26.5 6.8 Q26.5 12 25.5 16 L16 16 Z" fill="#5CB828"/>
<path d="M7 16 L16 16 L16 28 Q9 22 7 16 Z" fill="#1A6CE0"/>
<path d="M25.5 16 L16 16 L16 28 Q23 22 25.5 16 Z" fill="#F8C018"/></svg>
<div class="a lbl" style="left:458px;top:383px">Центр<br>обеспечен...</div>
<svg class="a" style="left:567px;top:345px" width="32" height="32" viewBox="0 0 32 32">
<path d="M17 14 L27 1 L30 2 L28 19 L20 22 Z" fill="#38B838" stroke="#1A7A1A" stroke-width="0.8"/>
<path d="M2 10 L10 7 L13 10 L24 9 L26 30 L3 32 Z" fill="url(#foldb)" stroke="#B88A30" stroke-width="0.8"/>
<path d="M7 16 L31 14 L26 31 L2 32 Z" fill="url(#fold)" stroke="#B88A30" stroke-width="0.8"/>
<path d="M9 29 L14 20 L17 29 M11 25.5 H16 M19 21 L22 21 L20 29" stroke="#C8A040" stroke-width="1.2" fill="none"/></svg>
<div class="a lbl" style="left:533px;top:383px">Шрифты</div>
<svg class="a" style="left:642px;top:345px" width="32" height="32" viewBox="0 0 32 32">
<ellipse cx="12" cy="28" rx="11" ry="4.2" fill="url(#lav)" stroke="#8080B0" stroke-width="0.6"/>
<rect x="9" y="22" width="6" height="6" fill="#B0B0D8"/>
<path d="M1 3 L19 2 L20 23 L2 24 Z" fill="#C8D0E8" stroke="#6070A0" stroke-width="0.8"/>
<path d="M3 5 L17.5 4.3 L18 21 L3.5 21.8 Z" fill="url(#scr)"/>
<path d="M12 12 L31 24" stroke="#2A8A2A" stroke-width="3.4" stroke-linecap="round"/>
<path d="M12 12 L30 23.3" stroke="#70D060" stroke-width="1"/>
<path d="M6 8 L13 6 L15 11 L8 13 Z" fill="#F0A040" stroke="#A06010" stroke-width="0.6"/>
<ellipse cx="14" cy="13.5" rx="2.5" ry="1.8" fill="#D0D8F0"/></svg>
<div class="a lbl" style="left:608px;top:383px">Экран</div>
<svg class="a" style="left:717px;top:345px" width="32" height="32" viewBox="0 0 32 32">
<path d="M9 11 Q3 9 3 12 Q4 15 9 13" stroke="#A0A0A8" stroke-width="1.8" fill="none"/>
<path d="M20 17 Q23 13 26 16 Q28 18 26 21" stroke="#A0A0A8" stroke-width="1.8" fill="none"/>
<path d="M8 4 Q14.7 1 21.5 4 L21.5 20 Q14.7 24 8 20 Z" fill="url(#lav)" stroke="#7070A0" stroke-width="0.8"/>
<path d="M8.5 5 Q14.7 3 21 5 L21 12 Q14.7 10 8.5 12 Z" fill="#F07830"/>
<path d="M15 5 L21 5 L21 12 L15 11 Z" fill="#C83820"/>
<ellipse cx="14.7" cy="4" rx="6.8" ry="1.8" fill="#F4F4FF" stroke="#9090B0" stroke-width="0.6"/>
<path d="M18 23 Q19 17 25 17 Q32 17 32 23 Q31 27 25 27 Q19 27 18 23Z" fill="#9A9AE8" stroke="#5050A0" stroke-width="0.8"/>
<path d="M21 25 L20 30 M28 25 L28 30" stroke="#C8B030" stroke-width="2.2"/></svg>
<div class="a lbl" style="left:683px;top:383px">Электропи...</div>
<svg class="a" style="left:267px;top:420px" width="32" height="32" viewBox="0 0 32 32">
<ellipse cx="16.5" cy="29" rx="8.5" ry="3" fill="url(#gray)" stroke="#606070" stroke-width="0.8"/>
<rect x="15.5" y="24" width="2" height="5" fill="#9090B0"/>
<path d="M8 6 Q2 14 6 22 Q11 28 20 26" stroke="#8888C8" stroke-width="2" fill="none"/>
<path d="M16 2 Q18 1 19 3" stroke="#8888C8" stroke-width="2" fill="none"/>
<circle cx="17" cy="14" r="10.5" fill="url(#globe)" stroke="#1A3E98" stroke-width="0.6"/>
<path d="M12 5 Q18 3 22 6 Q24 9 20 10 Q17 11 18 16 Q19 21 15 24 Q12 20 13 15 Q9 13 10 9 Z" fill="#30B040" opacity="0.9"/>
<path d="M22 12 Q26 13 26 18 Q24 20 22 18 Z" fill="#30B040" opacity="0.8"/></svg>
<div class="a lbl" style="left:233px;top:458px">Язык и<br>региональ...</div>
<!--/GRID-->
<div class="a" style="left:4px;top:30px;width:1px;height:566px;background:#E8ECF8"></div>
<div class="a" style="left:4px;top:595px;width:792px;height:1px;background:#F0F2FA"></div>
<!--WM--><svg class="a" style="left:0;top:0;pointer-events:none" width="800" height="600"><text x="133" y="322" font-family="Liberation Sans" font-weight="bold" font-style="italic" font-size="62" textLength="522" lengthAdjust="spacingAndGlyphs" fill="#FFFFFF" fill-opacity="0.12" stroke="#B8BCC8" stroke-opacity="0.18" stroke-width="1.2">CRAZYSYSADMIN.RU</text></svg><!--/WM-->
</body></html>
